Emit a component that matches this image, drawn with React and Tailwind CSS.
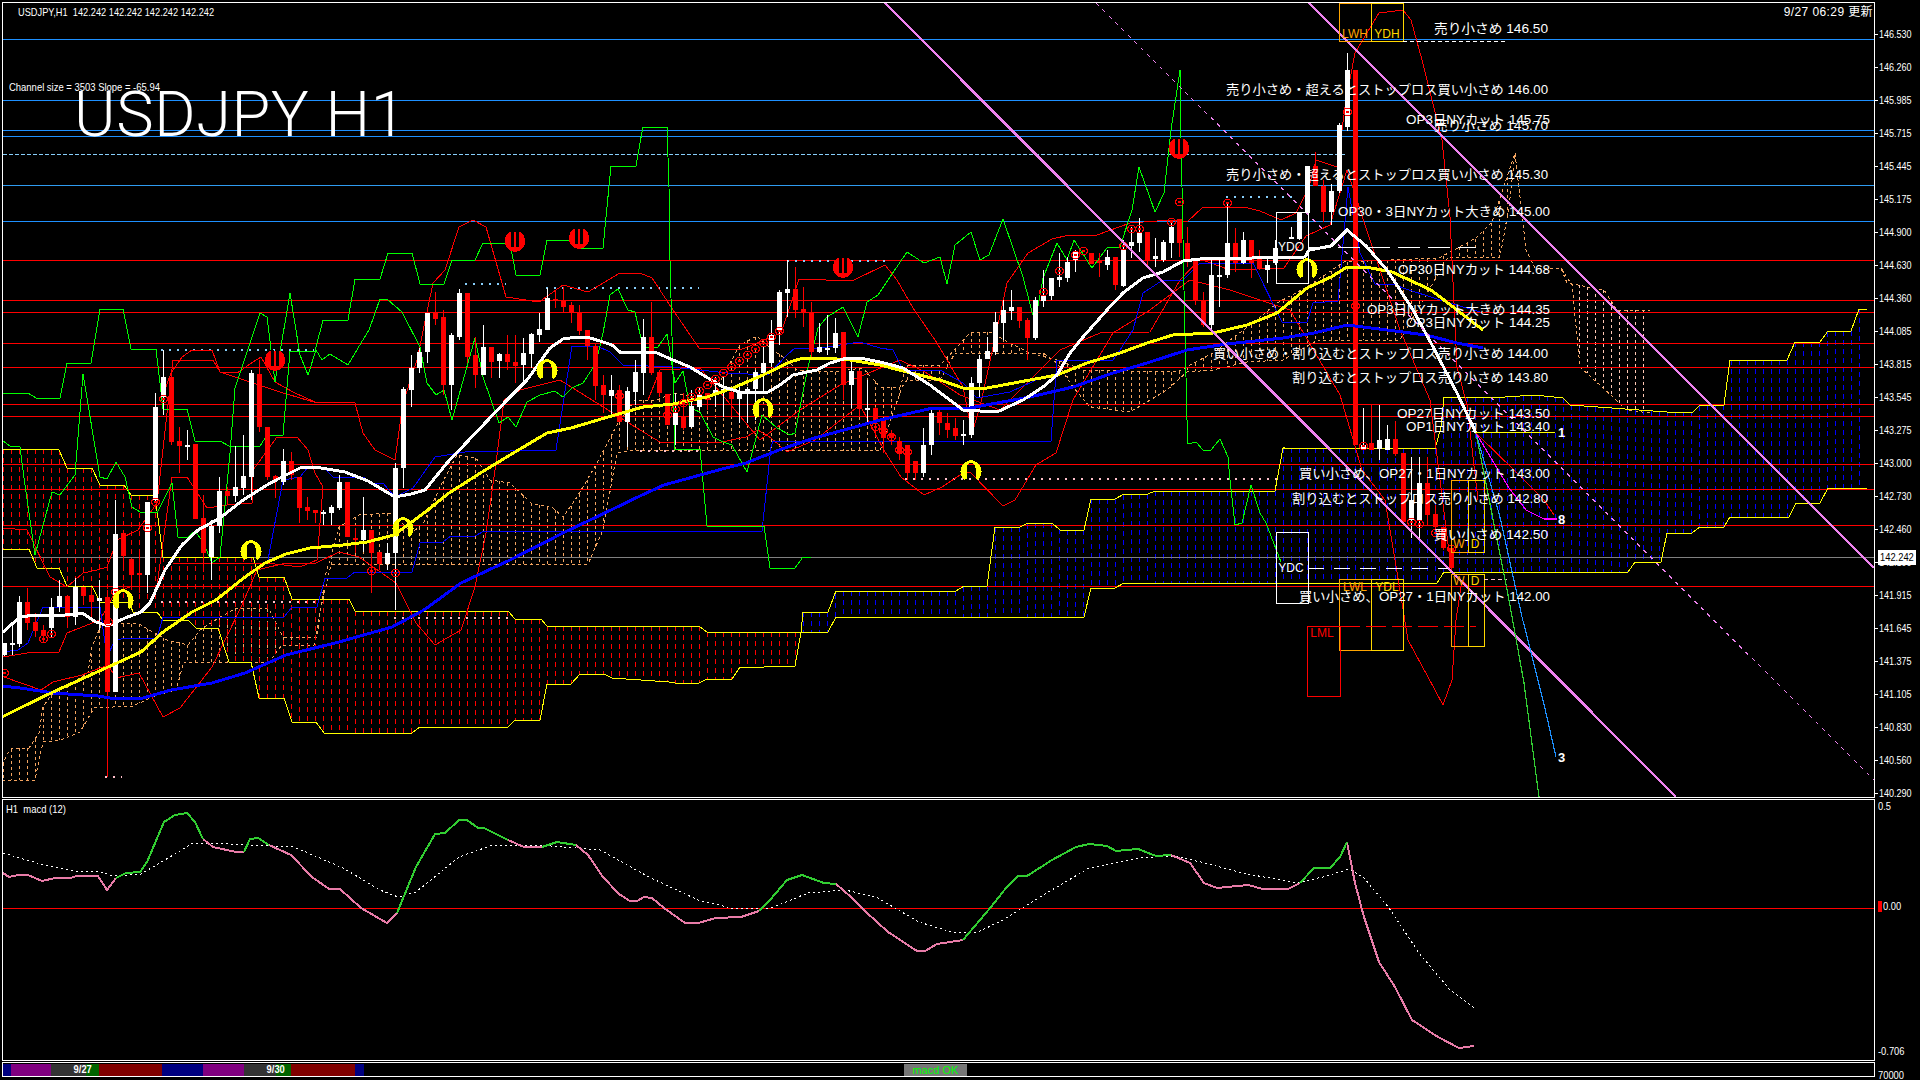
const P = (a) => a.map((p) => p.join(",")).join(" ");
const at = (poly, x) => {
  for (let i = 1; i < poly.length; i++) {
    if (x <= poly[i][0]) {
      const [x0, y0] = poly[i - 1];
      const [x1, y1] = poly[i];
      return y0 + ((y1 - y0) * (x - x0)) / Math.max(1, x1 - x0);
    }
  }
  return poly[poly.length - 1][1];
};

const blues = [[39, "#1e90ff"], [100, "#1e90ff"], [130, "#1e90ff"], [136, "#1e90ff"], [221, "#1e90ff"]];
const reds = [260, 300, 312, 343, 367, 404, 416, 464, 489, 525, 586];

const Y1 = [[2,449],[31,449],[59,450],[67,468],[92,468],[100,485],[124,485],[131,495],[155,495],[163,557],[253,557],[259,577],[284,577],[292,599],[349,599],[355,611],[508,611],[515,619],[541,619],[547,626],[699,626],[707,632],[801,632],[803,612],[828,612],[836,591],[956,591],[964,586],[987,586],[995,527],[1020,527],[1028,523],[1052,523],[1060,530],[1084,530],[1091,499],[1115,499],[1124,494],[1148,494],[1155,491],[1275,491],[1283,448],[1435,449],[1441,427],[1444,397],[1505,397],[1535,395],[1563,398],[1570,405],[1667,412],[1693,412],[1700,405],[1724,405],[1730,360],[1787,360],[1795,342],[1820,342],[1828,331],[1851,331],[1859,309],[1867,309]];
const Y2 = [[2,549],[29,549],[37,568],[59,568],[67,586],[92,586],[100,602],[129,602],[133,612],[157,612],[163,620],[188,620],[196,628],[218,628],[229,662],[251,662],[259,698],[284,698],[292,722],[316,722],[324,733],[412,733],[420,727],[508,727],[515,720],[540,720],[547,684],[571,684],[580,674],[604,674],[612,678],[669,682],[675,683],[699,683],[707,679],[732,679],[740,667],[764,667],[771,666],[795,666],[801,632],[828,632],[836,617],[1084,617],[1091,588],[1115,588],[1124,583],[1437,583],[1444,572],[1628,572],[1635,562],[1661,562],[1667,533],[1692,533],[1700,527],[1724,527],[1730,517],[1789,517],[1796,503],[1820,503],[1828,488],[1867,488]];
const D1 = [[2,765],[8,753],[12,748],[29,748],[39,733],[43,707],[51,695],[88,673],[92,647],[102,623],[139,624],[167,640],[188,645],[200,630],[220,617],[237,608],[269,609],[283,637],[317,637],[325,577],[339,527],[359,515],[392,513],[412,533],[424,522],[441,485],[457,455],[476,458],[490,480],[510,483],[531,503],[553,508],[563,517],[577,497],[597,463],[618,423],[635,400],[657,400],[673,393],[710,400],[740,345],[757,336],[770,348],[787,360],[797,370],[833,372],[863,368],[880,387],[900,387],[907,365],[940,365],[957,347],[970,333],[990,332],[1010,343],[1030,353],[1057,360],[1083,370],[1177,372],[1213,353],[1253,323],[1277,303],[1307,287],[1344,262],[1439,258],[1476,238],[1492,222],[1515,153],[1526,250],[1535,268],[1561,268],[1567,283],[1604,290],[1617,310],[1650,310]];
const D2 = [[2,780],[35,780],[43,742],[61,740],[80,732],[94,708],[133,706],[157,695],[176,690],[184,662],[269,662],[282,645],[314,645],[322,603],[331,565],[588,564],[603,530],[617,453],[633,450],[880,451],[902,387],[907,380],[940,380],[955,353],[1043,353],[1057,363],[1073,387],[1090,407],[1130,412],[1167,390],[1187,372],[1213,370],[1247,362],[1283,360],[1318,340],[1400,340],[1448,257],[1500,257],[1509,207],[1515,153],[1526,250],[1535,268],[1561,268],[1572,285],[1580,367],[1613,397],[1626,410],[1650,413]];

const stepG = [[3,393],[28,393],[36,398],[60,398],[67,363],[91,363],[100,309],[123,309],[131,349],[156,349],[163,409],[187,409],[195,441],[220,441],[229,446],[260,446],[267,435],[283,435],[290,351],[315,351],[323,320],[348,320],[355,279],[380,279],[388,253],[412,253],[420,284],[444,284],[452,260],[475,260],[483,243],[510,243],[516,275],[540,275],[547,240],[570,240],[578,248],[603,248],[611,166],[636,166],[640,143],[643,127],[667,127],[669,187],[670,260],[675,449],[700,449],[707,526],[764,526],[770,568],[795,568],[803,557],[811,557]];
const wigG = [[3,441],[10,446],[20,447],[24,478],[35,555],[52,492],[60,495],[75,475],[83,374],[100,477],[107,479],[116,462],[125,477],[132,507],[140,512],[157,513],[172,483],[178,537],[187,538],[195,531],[203,542],[212,563],[220,557],[230,453],[235,388],[260,313],[267,317],[275,382],[290,293],[300,355],[308,375],[316,350],[322,360],[330,354],[348,365],[361,343],[369,330],[380,299],[388,300],[402,312],[420,347],[427,383],[436,395],[444,390],[452,420],[475,338],[483,377],[499,423],[508,417],[516,427],[527,402],[540,395],[555,391],[563,397],[572,388],[583,383],[596,363],[603,333],[610,295],[618,289],[628,310],[635,312],[643,347],[658,347],[667,334],[675,383],[683,371],[690,408],[700,412],[713,437],[723,442],[732,445],[747,472],[762,415],[777,428],[790,435],[795,433],[808,367],[818,328],[827,317],[843,307],[858,337],[867,302],[878,295],[890,277],[907,252],[924,263],[940,257],[947,284],[955,245],[971,232],[980,260],[989,255],[1003,219],[1023,277],[1035,323],[1043,278],[1057,243],[1067,260],[1074,240],[1092,268],[1107,248],[1120,247],[1132,210],[1139,167],[1155,212],[1164,193],[1171,130],[1180,70],[1181,153],[1182,187],[1184,290],[1187,420],[1188,444],[1196,442],[1203,450],[1211,450],[1220,439],[1228,457],[1230,480],[1235,525],[1242,523],[1251,485],[1260,513],[1266,523],[1281,562]];
const maW = [[3,632],[20,617],[35,615],[65,615],[82,613],[96,622],[108,626],[125,618],[141,612],[150,603],[165,570],[182,545],[198,530],[220,518],[243,500],[267,485],[280,478],[300,468],[315,467],[345,472],[368,481],[395,497],[411,494],[425,490],[447,463],[467,442],[507,400],[527,380],[550,348],[563,339],[577,337],[587,337],[603,342],[612,345],[620,352],[640,352],[657,353],[673,360],[690,367],[703,375],[723,387],[740,392],[757,393],[768,392],[780,385],[793,375],[817,370],[830,363],[847,358],[860,358],[880,362],[903,368],[930,385],[963,410],[997,412],[1023,400],[1043,387],[1057,375],[1070,353],[1083,337],[1107,310],[1123,293],[1143,278],[1163,272],[1183,261],[1200,259],[1305,257],[1309,250],[1331,246],[1347,230],[1366,246],[1387,270],[1413,310],[1431,343],[1457,393],[1476,433]];
const maY = [[2,717],[20,708],[53,692],[106,668],[141,652],[163,632],[192,612],[216,600],[245,577],[265,563],[286,554],[310,548],[343,545],[367,542],[394,535],[424,513],[449,493],[482,472],[510,455],[547,433],[571,428],[608,417],[643,407],[673,404],[707,397],[733,388],[763,375],[790,362],[803,358],[823,358],[850,360],[880,365],[907,372],[940,380],[963,388],[987,388],[1030,380],[1057,375],[1087,363],[1120,353],[1147,343],[1173,335],[1213,333],[1247,325],[1277,313],[1307,288],[1331,277],[1347,267],[1366,267],[1392,272],[1431,290],[1483,330]];
const maB = [[2,686],[20,688],[53,693],[98,696],[110,698],[143,698],[171,690],[212,683],[245,673],[286,655],[339,642],[392,627],[424,610],[461,583],[510,560],[563,533],[640,496],[664,485],[693,477],[722,469],[746,463],[779,450],[811,439],[844,430],[880,420],[933,408],[970,408],[997,403],[1030,397],[1073,387],[1113,373],[1147,363],[1187,350],[1227,344],[1283,338],[1314,333],[1347,325],[1387,330],[1426,335],[1457,343],[1483,348]];
const blue1 = [[3,652],[18,650],[28,643],[43,607],[100,607],[107,657],[115,640],[128,638],[157,638],[163,617],[284,617],[292,607],[317,607],[325,578],[347,578],[355,572],[412,572],[420,543],[443,542],[451,536],[475,536],[484,531],[762,531],[771,447],[773,441],[1051,441],[1057,360],[1078,360],[1113,360],[1120,350],[1133,330],[1143,293],[1163,280],[1183,280],[1200,263],[1253,263],[1282,322],[1307,322],[1313,303],[1338,301],[1348,187],[1360,253],[1375,284],[1393,284],[1403,288],[1440,300],[1480,312]];
const blue2 = [[268,560],[283,480],[300,477],[308,467],[323,467],[333,477],[363,477],[372,483],[383,483],[395,497],[413,488],[435,457],[465,452],[556,450],[572,346],[597,346],[610,352],[623,365],[672,367],[727,373],[768,375],[787,355],[795,348],[820,348],[860,342],[880,348],[893,350],[903,370],[940,370],[963,383],[977,398],[1010,392],[1043,377]];
const upper = [[161,400],[171,373],[182,357],[192,350],[212,350],[220,372],[237,373],[253,362],[261,357],[275,382],[293,392],[317,403],[343,402],[355,403],[363,433],[375,450],[395,460],[403,403],[417,360],[433,283],[445,270],[459,227],[473,220],[486,227],[506,297],[539,302],[563,285],[588,292],[620,273],[640,273],[652,278],[673,310],[699,348],[740,350],[781,333],[799,279],[852,281],[885,265],[897,280],[913,308],[937,343],[963,387],[972,433],[980,407],[1007,283],[1028,253],[1052,239],[1069,235],[1097,235],[1130,223],[1171,220],[1187,222],[1203,207],[1244,207],[1260,211],[1281,220],[1296,213],[1309,187],[1316,160],[1337,167],[1346,100],[1355,53],[1379,13],[1403,10],[1411,20],[1422,60],[1442,140],[1450,217],[1457,367],[1467,405],[1478,500]];
const lower = [[4,677],[41,690],[53,682],[82,675],[108,665],[116,678],[139,673],[163,717],[180,708],[212,667],[241,607],[257,570],[286,563],[316,563],[339,552],[359,557],[396,583],[416,623],[435,645],[461,630],[475,587],[486,533],[496,463],[504,400],[520,390],[560,380],[640,430],[660,442],[722,442],[746,437],[758,430],[771,438],[787,452],[815,440],[860,405],[885,452],[901,477],[924,495],[942,487],[960,475],[970,472],[1003,506],[1015,500],[1036,465],[1056,453],[1073,400],[1113,333],[1150,310],[1190,280],[1230,290],[1290,310],[1340,395],[1362,470],[1385,500],[1395,560],[1408,640],[1435,690],[1443,705],[1452,680],[1456,620],[1462,580],[1480,600]];
const midR = [[3,528],[27,530],[50,577],[67,587],[83,573],[97,570],[107,567],[117,540],[138,530],[157,503],[173,360],[213,360],[220,372],[280,392],[317,403]];
const stepR = [[3,657],[33,652],[59,652],[67,633],[100,620],[115,593],[132,586],[157,586],[172,477],[187,477],[207,508],[227,505],[252,503],[253,470],[277,437],[297,437],[308,450],[315,473],[323,487],[317,560],[300,567],[267,563],[173,564]];
const stepR2 = [[648,400],[660,370],[700,368],[760,440],[800,410],[840,385],[900,360],[925,372],[960,395],[1000,410],[1060,350],[1100,333],[1150,332],[1180,280],[1200,259],[1230,270],[1284,268],[1306,236],[1330,225],[1347,170],[1370,240],[1400,330],[1430,400],[1450,560]];

const C = [[4,"w",643,643,655,656],[12,"w",623,643,645,655],[19,"w",596,602,644,647],[27,"r",588,602,623,630],[35,"r",613,622,631,637],[43,"r",625,630,635,642],[51,"w",598,607,628,638],[59,"w",580,596,607,612],[67,"r",595,596,617,628],[75,"w",578,587,617,625],[83,"r",587,587,596,605],[91,"r",587,595,602,617],[99,"w",580,598,601,630],[107,"r",590,597,692,777],[115,"w",500,534,692,692],[123,"r",533,533,556,567],[131,"r",559,559,575,590],[139,"r",552,573,575,593],[147,"w",502,502,575,593],[155,"w",393,407,500,503],[163,"w",350,377,397,415],[171,"r",373,377,442,445],[179,"r",427,441,446,473],[187,"w",430,445,446,460],[195,"r",444,444,519,519],[203,"r",495,518,553,572],[211,"w",520,526,557,580],[219,"w",477,491,526,533],[227,"r",487,491,496,505],[235,"w",446,487,496,502],[243,"w",435,476,488,495],[251,"w",370,373,477,500],[259,"r",360,374,427,432],[267,"r",427,427,477,480],[275,"r",475,476,481,498],[283,"w",449,461,482,485],[291,"r",452,461,475,480],[299,"r",477,477,508,523],[307,"r",497,507,511,520],[315,"r",510,510,513,523],[323,"w",510,512,513,525],[331,"w",505,507,513,525],[339,"w",475,482,508,510],[347,"r",482,482,537,537],[355,"r",528,538,540,553],[363,"w",497,530,540,552],[371,"r",530,530,553,593],[379,"r",552,552,564,570],[387,"w",543,553,564,570],[395,"w",463,468,553,610],[403,"w",387,389,468,488],[411,"w",355,368,390,407],[419,"w",348,352,368,373],[427,"w",313,313,352,363],[435,"r",292,312,319,325],[443,"r",310,317,385,395],[451,"w",333,335,385,410],[459,"w",289,293,337,340],[467,"r",293,293,357,363],[475,"r",337,355,375,388],[483,"w",325,347,375,375],[491,"r",347,347,362,378],[499,"w",353,354,361,378],[507,"r",335,354,362,370],[515,"r",335,362,366,383],[523,"w",338,353,365,383],[531,"w",333,334,354,368],[539,"w",313,329,335,342],[547,"w",288,298,330,330],[555,"r",290,299,301,308],[563,"r",287,300,307,312],[571,"r",302,305,313,323],[579,"r",305,313,331,335],[587,"r",330,330,346,360],[595,"r",343,346,386,400],[603,"r",375,385,395,413],[611,"w",375,390,396,417],[619,"r",385,390,422,422],[627,"w",387,391,422,447],[635,"w",360,372,392,405],[643,"w",319,337,373,395],[651,"r",302,337,373,375],[659,"r",372,372,393,397],[667,"r",394,394,425,425],[675,"w",393,413,425,445],[683,"r",393,417,428,430],[691,"w",390,406,427,428],[699,"w",388,395,407,410],[707,"r",393,393,400,410],[715,"w",377,390,394,407],[723,"w",377,389,392,417],[731,"r",387,392,399,417],[739,"w",383,393,399,423],[747,"w",387,389,391,423],[755,"w",370,372,389,420],[763,"w",347,363,373,393],[771,"w",320,335,363,367],[779,"w",290,292,330,345],[787,"w",260,289,293,317],[795,"r",267,289,310,318],[803,"r",287,309,313,327],[811,"r",302,313,352,360],[819,"w",323,347,352,353],[827,"w",315,348,350,355],[835,"w",318,333,348,353],[843,"r",332,332,385,400],[851,"w",362,371,385,408],[859,"r",370,371,409,417],[867,"w",380,408,409,423],[875,"r",407,408,422,437],[883,"r",420,420,438,453],[891,"r",430,434,438,445],[899,"r",437,441,453,460],[907,"r",445,445,473,480],[915,"r",461,461,473,480],[923,"w",428,445,473,477],[931,"w",408,413,445,455],[939,"r",407,412,423,435],[947,"r",413,423,430,438],[955,"r",418,428,436,440],[963,"w",420,434,436,445],[971,"w",377,383,435,438],[979,"w",355,359,383,397],[987,"w",337,351,359,357],[995,"w",312,322,352,355],[1003,"w",300,310,323,340],[1011,"w",290,307,311,320],[1019,"r",307,307,321,328],[1027,"r",318,320,338,360],[1035,"w",297,300,338,340],[1043,"w",270,296,301,307],[1051,"w",278,278,296,300],[1059,"w",253,277,280,287],[1067,"w",257,262,278,282],[1075,"w",250,252,260,272],[1091,"r",253,253,264,264],[1099,"r",253,261,263,277],[1107,"w",250,257,265,270],[1115,"r",257,257,285,290],[1123,"w",240,250,286,287],[1131,"w",227,242,246,258],[1139,"w",218,233,243,252],[1147,"r",232,232,260,267],[1155,"w",238,256,259,267],[1163,"w",240,242,260,262],[1171,"w",223,227,243,258],[1179,"r",219,219,243,257],[1187,"r",227,243,260,267],[1195,"r",260,260,300,305],[1203,"r",292,301,325,327],[1211,"w",257,275,325,332],[1219,"w",260,275,276,307],[1227,"w",203,243,275,278],[1235,"r",228,243,263,272],[1243,"w",232,240,263,264],[1251,"r",240,240,263,278],[1259,"r",250,258,268,270],[1267,"w",257,265,270,283],[1275,"w",240,248,263,265],[1291,"w",227,237,239,239],[1299,"w",212,212,239,240],[1307,"w",166,166,213,214],[1315,"r",152,166,186,186],[1323,"r",180,186,212,222],[1331,"w",184,191,212,225],[1339,"w",123,125,191,193],[1347,"w",53,70,127,131],[1355,"r",70,70,445,445],[1363,"w",408,445,449,450],[1371,"r",405,443,450,450],[1379,"w",405,440,449,460],[1387,"w",425,439,450,450],[1395,"r",421,439,454,456],[1403,"r",453,453,522,525],[1411,"w",457,500,520,538],[1419,"w",457,483,520,540],[1427,"r",457,483,515,525],[1435,"r",505,514,527,530],[1443,"r",527,527,548,550],[1451,"r",548,548,568,570]];

const circles = [[163,399],[155,502],[147,528],[115,592],[51,634],[43,639],[371,571],[395,573],[108,622],[4,673],[619,396],[667,415],[675,409],[683,403],[691,397],[699,391],[707,385],[715,379],[723,373],[731,367],[739,361],[747,355],[755,349],[763,343],[771,337],[779,331],[875,427],[883,431],[891,437],[899,450],[907,452],[1043,292],[1059,271],[1075,255],[1083,251],[1123,246],[1131,229],[1139,229],[1171,222],[1179,202],[1227,203],[1347,112],[1355,306],[1363,446],[1411,522],[1419,524],[1435,533],[1451,549]];
const redMarks = [[515,242],[579,239],[275,361],[843,268],[1179,149]];
const yelMarks = [[547,369],[123,599],[251,550],[403,527],[763,408],[971,470],[1307,268]];

const notes = [
  ["売り小さめ 146.50", 1434, 114, 28],
  ["売り小さめ・超えるとストップロス買い小さめ 146.00", 1226, 322, 89],
  ["OP3日NYカット 145.75", 1406, 144, 119],
  ["売り小さめ 145.70", 1434, 114, 125],
  ["売り小さめ・超えるとストップロス買い小さめ 145.30", 1226, 322, 174],
  ["OP30・3日NYカット大きめ 145.00", 1338, 212, 211],
  ["OP30日NYカット 144.68", 1398, 152, 269],
  ["OP3日NYカット大きめ 144.35", 1367, 183, 309],
  ["OP3日NYカット 144.25", 1406, 144, 322],
  ["買い小さめ・割り込むとストップロス売り小さめ 144.00", 1213, 335, 353],
  ["割り込むとストップロス売り小さめ 143.80", 1292, 256, 377],
  ["OP27日NYカット 143.50", 1397, 153, 413],
  ["OP1日NYカット 143.40", 1406, 144, 426],
  ["買い小さめ、OP27・1日NYカット 143.00", 1299, 251, 473],
  ["割り込むとストップロス売り小さめ 142.80", 1292, 256, 498],
  ["買い小さめ 142.50", 1434, 114, 534],
  ["買い小さめ、OP27・1日NYカット 142.00", 1299, 251, 596],
];

const boxes = [
  [1276, 212, 32, 71, "#ffffff"], [1276, 532, 32, 71, "#ffffff"],
  [1339, 3, 32, 38, "#ffa500"], [1371, 3, 32, 38, "#ffd700"],
  [1339, 579, 32, 71, "#ffa500"], [1371, 579, 32, 71, "#ffd700"],
  [1307, 626, 33, 70, "#ff0000"],
  [1451, 480, 17, 72, "#ffa500"], [1468, 480, 16, 72, "#ffd700"],
  [1451, 574, 17, 72, "#ffa500"], [1468, 574, 16, 72, "#ffd700"],
];
const boxLabels = [
  ["YDO", 1291, 247, "#ffffff"], ["YDC", 1291, 568, "#ffffff"], ["LWH", 1355, 34, "#ffa500"], ["YDH", 1387, 34, "#ffd700"],
  ["LWL", 1355, 587, "#ffa500"], ["YDL", 1387, 587, "#ffd700"], ["LML", 1322, 633, "#ff0000"],
  ["W", 1459, 544, "#ffa500"], ["D", 1475, 544, "#ffd700"], ["W", 1459, 581, "#ffa500"], ["D", 1475, 581, "#ffd700"],
];
const dotted = [
  [161, 314, 350, "#87cefa"], [465, 506, 284, "#87cefa"], [546, 699, 288, "#87cefa"], [787, 891, 261, "#87cefa"], [1226, 1296, 197, "#87cefa"],
  [161, 316, 602, "#ffc0cb"], [394, 508, 618, "#ffc0cb"], [640, 701, 451, "#ffc0cb"], [905, 1083, 479, "#ffc0cb"], [1091, 1279, 479, "#ffc0cb"], [105, 122, 777, "#ffc0cb"],
];

const grid = Array.from({ length: 233 }, (_, k) => 3 + 8 * k);

const macdPink = [
  [[3,873],[9,877],[18,875],[28,875],[42,881],[55,878],[70,878],[77,876],[98,876],[107,890],[116,878]],
  [[203,839],[213,847],[236,852],[244,852]],
  [[269,845],[291,855],[312,877],[329,889],[340,889],[361,908],[387,923],[397,913]],
  [[508,840],[524,847],[542,847]],
  [[576,845],[588,855],[603,877],[619,894],[630,901],[637,901],[644,897],[652,898],[664,908],[685,923],[698,923],[716,918],[741,917],[759,911]],
  [[836,884],[851,897],[866,912],[888,932],[917,951],[925,951],[937,944],[963,940]],
  [[1171,855],[1190,863],[1204,883],[1217,888],[1248,885],[1263,889],[1288,889],[1300,883]],
  [[1347,842],[1355,883],[1364,917],[1379,962],[1395,987],[1412,1020],[1438,1037],[1459,1048],[1474,1046]],
];
const macdGreen = [
  [[116,878],[126,873],[140,872],[147,862],[164,822],[175,815],[187,813],[195,822],[203,839]],
  [[244,852],[250,839],[258,838],[269,845]],
  [[397,913],[416,867],[435,834],[445,833],[459,820],[467,820],[478,828],[484,828],[508,840]],
  [[542,847],[557,842],[576,845]],
  [[759,911],[770,900],[787,880],[802,875],[824,883],[836,884]],
  [[963,940],[991,907],[1006,888],[1018,876],[1027,876],[1052,860],[1076,847],[1089,844],[1107,846],[1116,851],[1138,849],[1156,856],[1171,855]],
  [[1300,883],[1314,868],[1330,868],[1340,857],[1347,842]],
];
const macdSig = [[3,853],[37,863],[73,871],[101,872],[113,876],[141,874],[165,860],[193,843],[214,843],[245,845],[294,847],[343,868],[380,890],[398,897],[416,892],[459,857],[490,846],[539,845],[600,850],[649,877],[698,900],[735,909],[771,908],[808,893],[845,890],[876,897],[919,922],[955,933],[978,932],[1003,920],[1040,897],[1089,868],[1138,858],[1174,856],[1205,863],[1242,873],[1297,883],[1327,876],[1349,869],[1364,878],[1389,908],[1419,953],[1450,990],[1474,1008]];

const axis = ["146.530","146.260","145.985","145.715","145.445","145.175","144.900","144.630","144.360","144.085","143.815","143.545","143.275","143.000","142.730","142.460","142.190","141.915","141.645","141.375","141.105","140.830","140.560","140.290"];

const segs = [
  "w-[8px] bg-[#000080]", "w-[40px] bg-[#800080]", "w-[35px] bg-[#333333]", "w-[13px] bg-[#006400]",
  "w-[63px] bg-[#800000]", "w-[41px] bg-[#000080]", "w-[41px] bg-[#800080]", "w-[32px] bg-[#333333]",
  "w-[15px] bg-[#006400]", "w-[64px] bg-[#800000]", "w-[9px] bg-[#000080]",
];

export default function App() {
  return (
    <div className="relative flex h-[1080px] w-[1920px] flex-col gap-px overflow-hidden bg-black pl-[2px] pt-[2px] font-['Liberation_Sans','Noto_Sans_CJK_JP',sans-serif] text-white">
      <div className="flex h-[796px]">
        <div className="relative h-full w-[1873px] overflow-hidden border-x border-y border-white">
          <svg viewBox="3 3 1871 794" width="1871" height="794" shapeRendering="crispEdges" className="block">
            {grid.filter((x) => x < 1650).map((x) => {
              const a = at(D1, x), b = at(D2, x);
              return <line key={"d" + x} x1={x} x2={x} y1={a} y2={b} stroke={x > 1572 ? "#ffc8b4" : "#f4a460"} strokeDasharray="3 3" />;
            })}
            <polyline points={P(D1)} fill="none" stroke="#f4a460" strokeDasharray="3 3" />
            <polyline points={P(D2)} fill="none" stroke="#f4a460" strokeDasharray="3 3" />
            {grid.filter((x) => x < 1867).map((x) => (
              <line key={"c" + x} x1={x} x2={x} y1={at(Y1, x)} y2={at(Y2, x)} stroke={x < 803 ? "#ff0000" : "#0000ff"} strokeDasharray="5 4" />
            ))}
            {blues.map(([y, c]) => <line key={y} x1="3" x2="1874" y1={y + 0.5} y2={y + 0.5} stroke={c} />)}
            <line x1="3" x2="1345" y1="154.5" y2="154.5" stroke="#87cefa" strokeDasharray="4 2" />
            <line x1="3" x2="1874" y1="185.5" y2="185.5" stroke="#2f9bf0" />
            {reds.map((y) => <line key={y} x1="3" x2="1874" y1={y + 0.5} y2={y + 0.5} stroke="#ff0000" />)}
            <line x1="3" x2="1874" y1="557.5" y2="557.5" stroke="#808080" />
            <polyline points={P(Y1)} fill="none" stroke="#ffff00" />
            <polyline points={P(Y2)} fill="none" stroke="#ffff00" />
            {dotted.map(([a, b, y, c], i) => <line key={i} x1={a} x2={b} y1={y} y2={y} stroke={c} strokeDasharray="2 6" strokeWidth="2" />)}
            <polyline points={P(upper)} fill="none" stroke="#ff0000" />
            <polyline points={P(lower)} fill="none" stroke="#ff0000" />
            <polyline points={P(midR)} fill="none" stroke="#ff0000" />
            <polyline points={P(stepR)} fill="none" stroke="#ff0000" />
            <polyline points={P(stepR2)} fill="none" stroke="#ff0000" />
            <polyline points={P(blue1)} fill="none" stroke="#0000ff" />
            <polyline points={P(blue2)} fill="none" stroke="#0000ff" />
            <polyline points={P(stepG)} fill="none" stroke="#00ff00" />
            <polyline points={P(wigG)} fill="none" stroke="#00ff00" />
            {C.map(([x, c, wt, bt, bb, wb]) => {
              const col = c === "r" ? "#ff0000" : "#ffffff";
              return (
                <g key={x}>
                  <rect x={x} y={wt} width="1" height={Math.max(wb - wt, 1)} fill={col} />
                  <rect x={x - 2} y={bt} width="5" height={Math.max(bb - bt, 2)} fill={col} />
                </g>
              );
            })}
            <polyline points={P(maB)} fill="none" stroke="#0000ff" strokeWidth="3" />
            <polyline points={P(maY)} fill="none" stroke="#ffff00" strokeWidth="3" />
            <polyline points={P(maW)} fill="none" stroke="#ffffff" strokeWidth="3" />
            {circles.map(([x, y]) => (
              <g key={x + "-" + y}>
                <circle cx={x + 0.5} cy={y} r="3.8" fill="none" stroke="#ff0000" strokeWidth="1.2" />
                <circle cx={x + 0.5} cy={y} r="1.5" fill="#ff0000" />
              </g>
            ))}
            {redMarks.map(([x, y]) => (
              <g key={x} transform={`translate(${x} ${y})`}>
                <path d="M-5 -10 C-13 -6 -12 9 0 10 C12 9 13 -6 5 -10 Z" fill="#ff0000" />
                <rect x="-4" y="-11" width="3" height="16" fill="#000000" />
                <rect x="1" y="-11" width="3" height="16" fill="#000000" />
              </g>
            ))}
            {yelMarks.map(([x, y]) => (
              <path key={x} transform={`translate(${x} ${y})`} d="M-4.5 9 L-7 10 C-13 4 -12 -8 0 -10 C12 -8 13 4 7 10 L4.5 9 L4.5 -2 C4.5 -5 2.5 -7.5 0 -7.5 C-2.5 -7.5 -4.5 -5 -4.5 -2 Z" fill="#ffff00" />
            ))}
            <line x1="885" y1="3" x2="1676" y2="797" stroke="#ee82ee" strokeWidth="2.4" />
            <line x1="1309" y1="3" x2="1874" y2="568" stroke="#ee82ee" strokeWidth="2.4" />
            <line x1="1096" y1="3" x2="1874" y2="780" stroke="#ee82ee" strokeWidth="1.2" strokeDasharray="4 5" />
            {boxes.map(([x, y, w, h, c], i) => <rect key={i} x={x} y={y} width={w} height={h} fill="none" stroke={c} />)}
            <line x1="1308" x2="1476" y1="247.5" y2="247.5" stroke="#ffffff" strokeDasharray="22 8" />
            <line x1="1308" x2="1448" y1="568.5" y2="568.5" stroke="#ffffff" strokeDasharray="16 10" />
            <line x1="1340" x2="1476" y1="626.5" y2="626.5" stroke="#ff0000" strokeDasharray="20 6" />
            <line x1="1403" x2="1507" y1="41.5" y2="41.5" stroke="#ffffff" strokeDasharray="4 3" />
            <line x1="1484" x2="1507" y1="579.5" y2="579.5" stroke="#ffc0cb" strokeDasharray="4 3" />
            <polyline points="1476,432 1555,432" fill="none" stroke="#ffff00" />
            <polyline points="1476,433 1509,600 1524,683 1539,797" fill="none" stroke="#32cd32" strokeWidth="1.2" />
            <polyline points="1476,433 1500,517 1522,617 1543,700 1556,757" fill="none" stroke="#1e90ff" strokeWidth="1.2" />
            <polyline points="1476,433 1509,488 1526,510 1544,519 1557,519" fill="none" stroke="#ff00ff" strokeWidth="1.2" />
            <polyline points="1476,433 1517,473 1544,500 1554,515" fill="none" stroke="#ff0000" />
            <g fontSize="13" fill="#ffffff">
              {notes.map(([t, x, w, y], i) => (
                <text key={i} x={x} y={y} textLength={w} lengthAdjust="spacingAndGlyphs" dominantBaseline="central">{t}</text>
              ))}
            </g>
            <g fontSize="12">
              {boxLabels.map(([t, x, y, c], i) => (
                <text key={i} x={x} y={y} textAnchor="middle" dominantBaseline="central" fill={c}>{t}</text>
              ))}
            </g>
            <g fontSize="13" fontWeight="700" fill="#ffffff">
              <text x="1558" y="432" dominantBaseline="central">1</text>
              <text x="1558" y="519" dominantBaseline="central">8</text>
              <text x="1558" y="757" dominantBaseline="central">3</text>
            </g>
          </svg>
          <div className="absolute left-[15px] top-[3px] origin-left scale-x-[0.84] whitespace-pre text-[11px] leading-[13px]">USDJPY,H1  142.242 142.242 142.242 142.242</div>
          <div className="absolute left-[6px] top-[78px] origin-left scale-x-[0.86] whitespace-pre text-[11px] leading-[13px]">Channel size = 3503 Slope = -65.94</div>
          <div className="absolute left-[71px] top-[80px] whitespace-pre font-['Roboto',sans-serif] text-[63px] font-light leading-[63px] tracking-[0.7px]">USDJPY H1</div>
          <div className="absolute right-[1px] top-[3px] whitespace-pre text-[12px] leading-[13px] tracking-[0.4px]">9/27 06:29 更新</div>
        </div>
        <div className="relative flex-1 pt-[16px]">
          {axis.map((v) => (
            <div key={v} className="flex h-[33px] items-center gap-[1px]">
              <span className="h-px w-[3px] bg-white" />
              <span className="origin-left scale-x-[0.82] text-[11px] leading-none">{v}</span>
            </div>
          ))}
          <div className="absolute left-[3px] top-[548px] flex h-[15px] w-[38px] items-center justify-center bg-white text-[11px] text-black">
            <span className="scale-x-[0.85]">142.242</span>
          </div>
        </div>
      </div>

      <div className="flex h-[262px]">
        <div className="relative h-full w-[1873px] overflow-hidden border border-white">
          <svg viewBox="3 800 1871 260" width="1871" height="260" shapeRendering="crispEdges" className="block">
            <line x1="3" x2="1874" y1="908.5" y2="908.5" stroke="#ff0000" />
            <polyline points={P(macdSig)} fill="none" stroke="#ffffff" strokeDasharray="2 3" />
            {macdPink.map((p, i) => <polyline key={i} points={P(p)} fill="none" stroke="#e87ca8" strokeWidth="2" />)}
            {macdGreen.map((p, i) => <polyline key={i} points={P(p)} fill="none" stroke="#32cd32" strokeWidth="2" />)}
          </svg>
          <div className="absolute left-[3px] top-[3px] origin-left scale-x-[0.86] whitespace-pre text-[11px] leading-[13px]">H1  macd (12)</div>
        </div>
        <div className="flex flex-1 flex-col pl-[3px] text-[11px] leading-none">
          <span className="mt-[2px] h-[13px] origin-left scale-x-[0.85]">0.5</span>
          <span className="mt-[86px] flex h-[13px] items-center gap-px">
            <span className="h-[11px] w-[4px] bg-[#ff0000]" />
            <span className="origin-left scale-x-[0.85]">0.00</span>
          </span>
          <span className="mt-[133px] h-[13px] origin-left scale-x-[0.85]">-0.706</span>
        </div>
      </div>

      <div className="flex h-[15px]">
        <div className="relative flex h-full w-[1873px] items-stretch border border-white pt-[1px]">
          {segs.map((c, i) => <div key={i} className={c} />)}
          <div className="absolute left-[69px] top-0 scale-x-[0.85] text-[11px] font-bold leading-[13px]">9/27</div>
          <div className="absolute left-[262px] top-0 scale-x-[0.85] text-[11px] font-bold leading-[13px]">9/30</div>
          <div className="ml-[540px] flex w-[63px] items-center justify-center overflow-hidden bg-[#777777] text-[11px] leading-none text-[#00ff00]">
            <span>macd OK</span>
          </div>
        </div>
        <div className="flex-1 pl-[3px]">
          <span className="inline-block origin-left scale-x-[0.85] text-[11px] leading-[15px]">70000</span>
        </div>
      </div>
    </div>
  );
}
